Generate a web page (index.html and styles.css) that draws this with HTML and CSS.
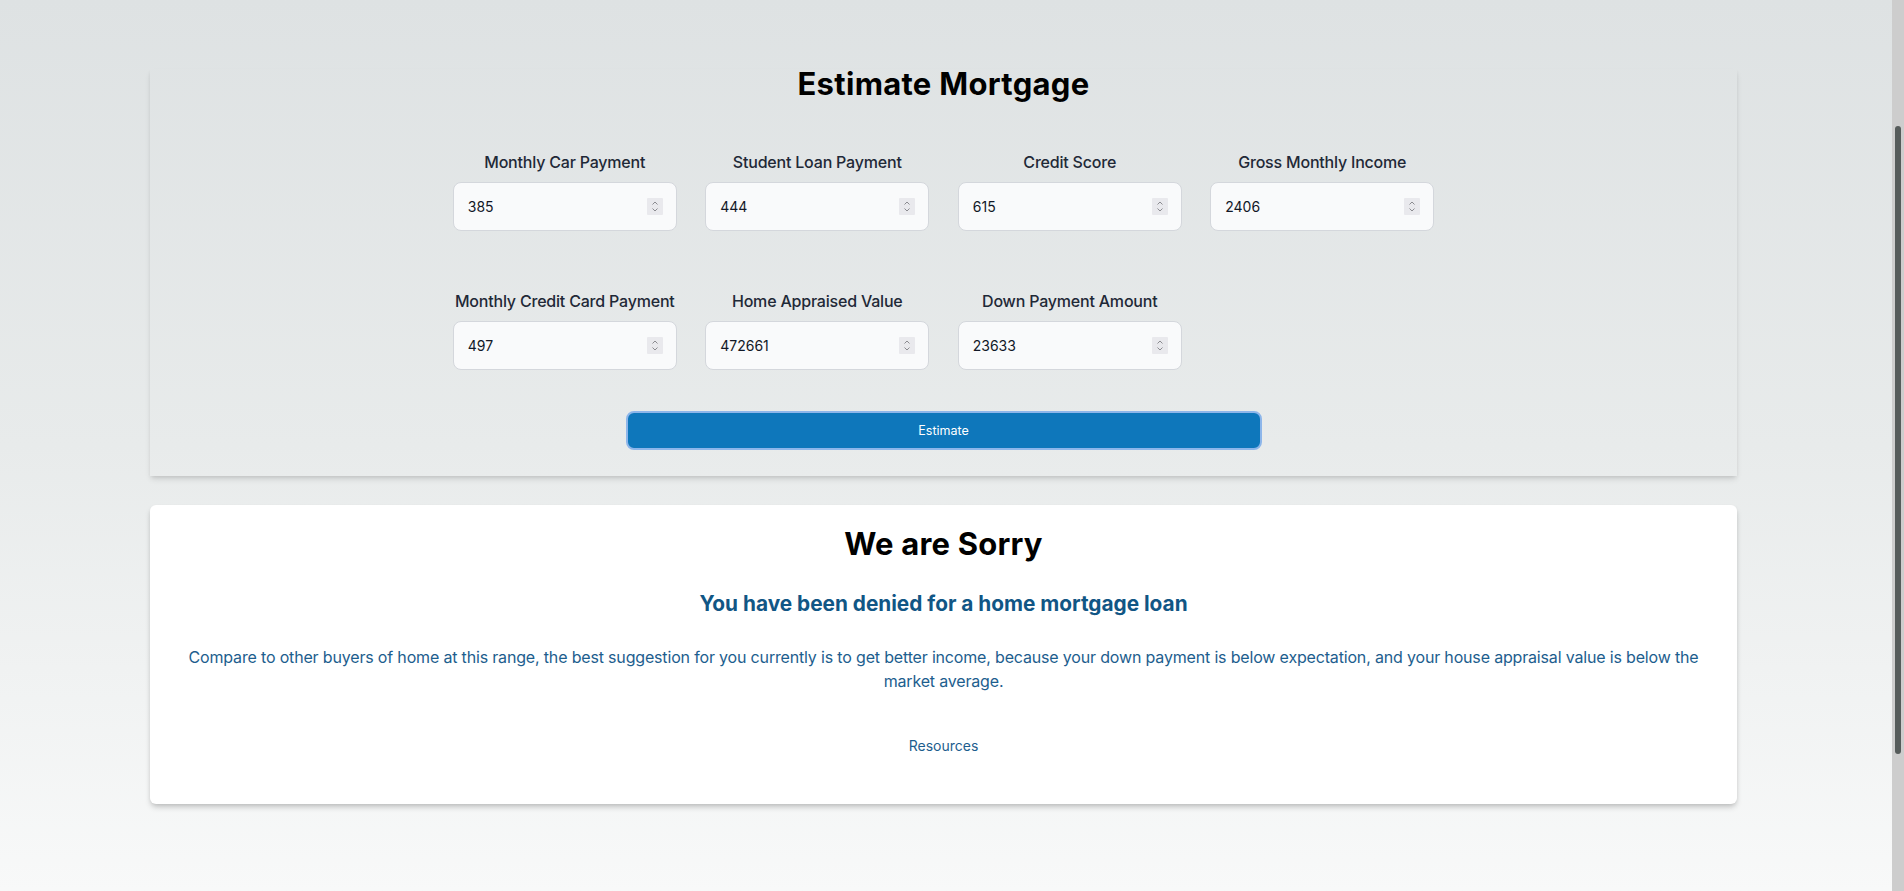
FILE: index.html
```html
<!DOCTYPE html>
<html lang="en">
<head>
<meta charset="utf-8">
<title>Estimate Mortgage</title>
<link rel="stylesheet" href="styles.css">
</head>
<body>
<main class="page">
  <section class="card card-form">
    <h1 class="title">Estimate Mortgage</h1>
    <div class="fields">
      <div class="field">
        <label class="field-label">Monthly Car Payment</label>
        <div class="input-box"><input class="input" type="text" value="385"><span class="spin"><svg width="16" height="17" viewBox="0 0 16 17"><path d="M5.5 6.5 8 4l2.5 2.5M5.5 10.5 8 13l2.5-2.5" fill="none" stroke="#8b8b90" stroke-width="1"/></svg></span></div>
      </div>
      <div class="field">
        <label class="field-label">Student Loan Payment</label>
        <div class="input-box"><input class="input" type="text" value="444"><span class="spin"><svg width="16" height="17" viewBox="0 0 16 17"><path d="M5.5 6.5 8 4l2.5 2.5M5.5 10.5 8 13l2.5-2.5" fill="none" stroke="#8b8b90" stroke-width="1"/></svg></span></div>
      </div>
      <div class="field">
        <label class="field-label">Credit Score</label>
        <div class="input-box"><input class="input" type="text" value="615"><span class="spin"><svg width="16" height="17" viewBox="0 0 16 17"><path d="M5.5 6.5 8 4l2.5 2.5M5.5 10.5 8 13l2.5-2.5" fill="none" stroke="#8b8b90" stroke-width="1"/></svg></span></div>
      </div>
      <div class="field">
        <label class="field-label">Gross Monthly Income</label>
        <div class="input-box"><input class="input" type="text" value="2406"><span class="spin"><svg width="16" height="17" viewBox="0 0 16 17"><path d="M5.5 6.5 8 4l2.5 2.5M5.5 10.5 8 13l2.5-2.5" fill="none" stroke="#8b8b90" stroke-width="1"/></svg></span></div>
      </div>
      <div class="field">
        <label class="field-label">Monthly Credit Card Payment</label>
        <div class="input-box"><input class="input" type="text" value="497"><span class="spin"><svg width="16" height="17" viewBox="0 0 16 17"><path d="M5.5 6.5 8 4l2.5 2.5M5.5 10.5 8 13l2.5-2.5" fill="none" stroke="#8b8b90" stroke-width="1"/></svg></span></div>
      </div>
      <div class="field">
        <label class="field-label">Home Appraised Value</label>
        <div class="input-box"><input class="input" type="text" value="472661"><span class="spin"><svg width="16" height="17" viewBox="0 0 16 17"><path d="M5.5 6.5 8 4l2.5 2.5M5.5 10.5 8 13l2.5-2.5" fill="none" stroke="#8b8b90" stroke-width="1"/></svg></span></div>
      </div>
      <div class="field">
        <label class="field-label">Down Payment Amount</label>
        <div class="input-box"><input class="input" type="text" value="23633"><span class="spin"><svg width="16" height="17" viewBox="0 0 16 17"><path d="M5.5 6.5 8 4l2.5 2.5M5.5 10.5 8 13l2.5-2.5" fill="none" stroke="#8b8b90" stroke-width="1"/></svg></span></div>
      </div>
    </div>
    <button class="btn" type="button">Estimate</button>
  </section>

  <section class="card card-result">
    <h2 class="result-title">We are Sorry</h2>
    <h3 class="result-sub">You have been denied for a home mortgage loan</h3>
    <p class="result-text">Compare to other buyers of home at this range, the best suggestion for you currently is to get better income, because your down payment is below expectation, and your house appraisal value is below the market average.</p>
    <p class="result-link"><a href="#" class="link">Resources</a></p>
  </section>
</main>
<div class="scrollbar"><div class="scrollbar-thumb"></div></div>
</body>
</html>
```

FILE: styles.css
```css
html {
  background: linear-gradient(to bottom, #dee2e3 0%, #e8ebeb 50%, #f8f9f9 100%);
}
body {
  margin: 0;
  height: 891px;
  overflow: hidden;
  display: flex;
  font-family: Inter, "Liberation Sans", Arial, sans-serif;
  color: #111827;
}
.page {
  flex: 1;
  padding: 69px 5px 0 0;
  display: flex;
  flex-direction: column;
  align-items: center;
  gap: 29px;
}
.scrollbar {
  flex: none;
  width: 12px;
  background: #cdcdcd;
}
.scrollbar-thumb {
  margin: 126px 3px 0;
  height: 628px;
  border-radius: 3px;
  background: #565c5b;
}
.card {
  width: 1587px;
  box-sizing: border-box;
  box-shadow: 0 4px 6px -1px rgba(0, 0, 0, 0.12), 0 2px 4px -1px rgba(0, 0, 0, 0.08);
}
.card-form {
  padding: 0 0 26px;
  display: flex;
  flex-direction: column;
  align-items: center;
}
.title {
  margin: 0;
  font-size: 31px;
  line-height: 30px;
  letter-spacing: 0.3px;
  font-weight: 700;
  color: #000;
}
.fields {
  margin-top: 51px;
  display: grid;
  grid-template-columns: repeat(4, 224px);
  column-gap: 28.5px;
  row-gap: 58px;
}
.field {
  display: flex;
  flex-direction: column;
  align-items: center;
}
.field-label {
  font-size: 16px;
  line-height: 24px;
  font-weight: 500;
  letter-spacing: -0.2px;
  color: #1f2937;
  white-space: nowrap;
  margin-bottom: 8px;
}
.input-box {
  width: 224px;
  height: 49px;
  box-sizing: border-box;
  display: flex;
  align-items: center;
  background: #f9fafb;
  border: 1px solid #d4d7dc;
  border-radius: 8px;
  padding: 0 13px 0 14px;
}
.input {
  flex: 1;
  min-width: 0;
  border: 0;
  outline: 0;
  background: transparent;
  padding: 0;
  font-family: Inter, "Liberation Sans", Arial, sans-serif;
  font-size: 14px;
  color: #111827;
}
.spin {
  display: block;
  width: 16px;
  height: 17px;
  background: #e9e9ed;
  border-radius: 1px;
}
.spin svg {
  display: block;
}
.btn {
  margin-top: 41px;
  width: 636px;
  height: 39px;
  box-sizing: border-box;
  background: #0e77bb;
  border: 2px solid #8db6ea;
  border-radius: 8px;
  color: #fff;
  font-family: Inter, "Liberation Sans", Arial, sans-serif;
  font-size: 12.5px;
  font-weight: 400;
  padding: 0;
}
.card-result {
  background: #fff;
  border-radius: 6px;
  padding: 21px 32px 48px;
  text-align: center;
  box-shadow: 0 4px 6px -1px rgba(0, 0, 0, 0.18), 0 2px 4px -1px rgba(0, 0, 0, 0.1);
}
.result-title {
  margin: 0;
  font-size: 31px;
  line-height: 36px;
  letter-spacing: 0.2px;
  font-weight: 700;
  color: #000;
}
.result-sub {
  margin: 28px 0 0;
  font-size: 20.8px;
  line-height: 28px;
  font-weight: 700;
  color: #115685;
}
.result-text {
  margin: 27px 0 0;
  font-size: 16px;
  line-height: 24px;
  letter-spacing: -0.17px;
  color: #1d5e8e;
}
.result-link {
  margin: 43px 0 0;
  font-size: 14px;
  line-height: 20px;
}
.link {
  color: #1d5e8e;
  text-decoration: none;
}
```
